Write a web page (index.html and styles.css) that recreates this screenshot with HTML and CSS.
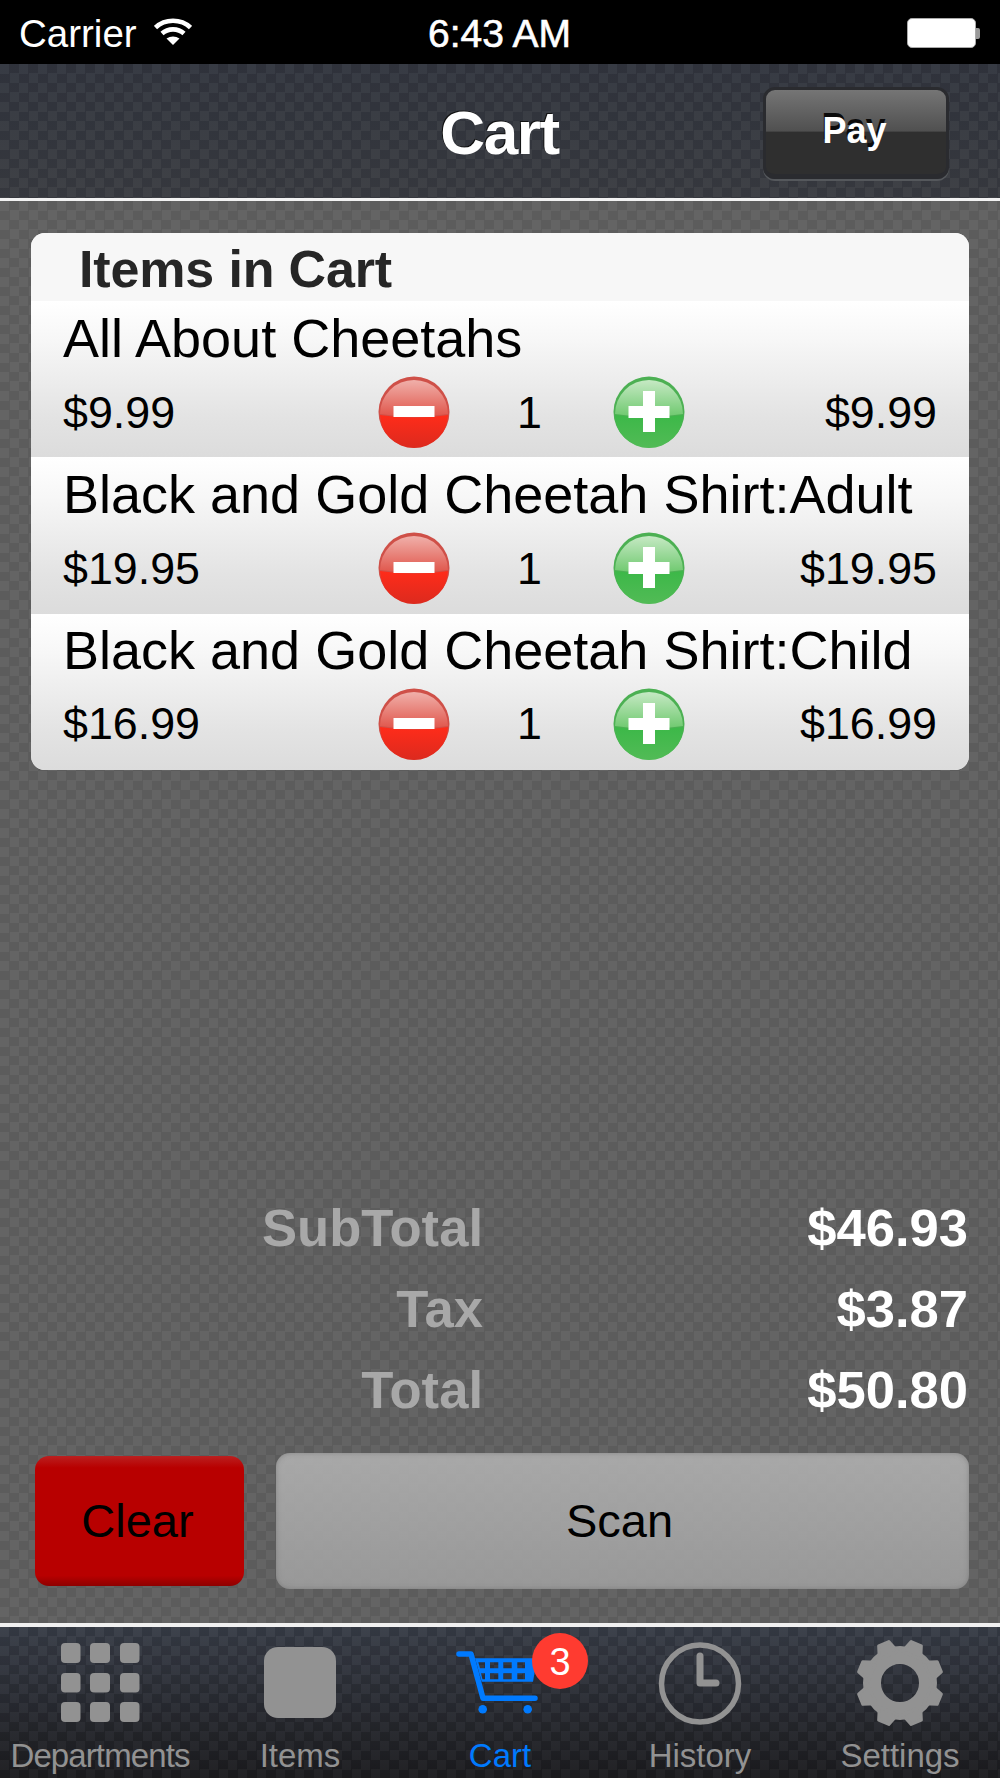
FILE: index.html
```html
<!DOCTYPE html>
<html lang="en">
<head>
<meta charset="utf-8">
<title>Cart</title>
<link rel="stylesheet" href="styles.css">
</head>
<body>
<div class="app">
  <div class="status">
    <div class="status-left">
      <span>Carrier</span>
      <svg class="wifi" viewBox="0 0 38 28"><g fill="none" stroke="#fff" stroke-width="4.600"><path d="M1.500 10.500C11 1.500 27 1.500 36.500 10.500"/><path d="M8 16.500C14 11 24 11 30 16.500"/></g><path d="M12.500 21.500C16.500 18.800 21.500 18.800 25.500 21.500L19 28Z" fill="#fff"/></svg>
    </div>
    <div class="clock">6:43 AM</div>
    <div class="battery"><div class="battery-body"></div><div class="battery-cap"></div></div>
  </div>

  <header class="nav">
    <h1 class="nav-title">Cart</h1>
    <button class="pay">Pay</button>
  </header>

  <main class="content">
    <section class="card">
      <h2 class="card-head">Items in Cart</h2>
      <article class="row">
        <div class="row-title">All About Cheetahs</div>
        <div class="row-line">
          <span class="price">$9.99</span>
          <svg class="round" viewBox="0 0 72 72"><use href="#minus-btn"/></svg>
          <span class="qty">1</span>
          <svg class="round" viewBox="0 0 72 72"><use href="#plus-btn"/></svg>
          <span class="total">$9.99</span>
        </div>
      </article>
      <article class="row">
        <div class="row-title">Black and Gold Cheetah Shirt:Adult</div>
        <div class="row-line">
          <span class="price">$19.95</span>
          <svg class="round" viewBox="0 0 72 72"><use href="#minus-btn"/></svg>
          <span class="qty">1</span>
          <svg class="round" viewBox="0 0 72 72"><use href="#plus-btn"/></svg>
          <span class="total">$19.95</span>
        </div>
      </article>
      <article class="row">
        <div class="row-title">Black and Gold Cheetah Shirt:Child</div>
        <div class="row-line">
          <span class="price">$16.99</span>
          <svg class="round" viewBox="0 0 72 72"><use href="#minus-btn"/></svg>
          <span class="qty">1</span>
          <svg class="round" viewBox="0 0 72 72"><use href="#plus-btn"/></svg>
          <span class="total">$16.99</span>
        </div>
      </article>
    </section>

    <section class="totals">
      <div class="sum-row"><span class="sum-label">SubTotal</span><span class="sum-value">$46.93</span></div>
      <div class="sum-row"><span class="sum-label">Tax</span><span class="sum-value">$3.87</span></div>
      <div class="sum-row"><span class="sum-label">Total</span><span class="sum-value">$50.80</span></div>
    </section>

    <div class="actions">
      <button class="clear">Clear</button>
      <button class="scan">Scan</button>
    </div>
  </main>

  <nav class="tabs">
    <div class="tab">
      <svg class="tab-icon" viewBox="0 0 100 100"><g fill="#929292"><rect x="11" y="10" width="19.500" height="20" rx="4"/><rect x="40" y="10" width="20" height="20" rx="4"/><rect x="70" y="10" width="19.500" height="20" rx="4"/><rect x="11" y="40" width="19.500" height="19.500" rx="4"/><rect x="40" y="40" width="20" height="19.500" rx="4"/><rect x="70" y="40" width="19.500" height="19.500" rx="4"/><rect x="11" y="69" width="19.500" height="20" rx="4"/><rect x="40" y="69" width="20" height="20" rx="4"/><rect x="70" y="69" width="19.500" height="20" rx="4"/></g></svg>
      <span class="tab-label tab-label-long">Departments</span>
    </div>
    <div class="tab">
      <svg class="tab-icon" viewBox="0 0 100 100"><rect x="14" y="14" width="72" height="71" rx="14" fill="#929292"/></svg>
      <span class="tab-label">Items</span>
    </div>
    <div class="tab tab-active">
      <svg class="tab-icon" viewBox="0 0 100 100"><path d="M9 21H21L33 65.300H85" fill="none" stroke="#007aff" stroke-width="5.500" stroke-linecap="round" stroke-linejoin="round"/><path d="M25 25.300H87L83 48.700H31.700ZM28.300 29.300L30 35.300H35V29.300ZM40 29.300V35.300H48.300V29.300ZM53.300 29.300V35.300H61.700V29.300ZM67.300 29.300V35.300H75V29.300ZM31 40.300L32.500 46.300H35V40.300ZM40 40.300V46.300H48.300V40.300ZM53.300 40.300V46.300H61.700V40.300ZM67.300 40.300V46.300H75V40.300Z" fill="#007aff" fill-rule="evenodd"/><circle cx="32.700" cy="76.300" r="4.300" fill="#007aff"/><circle cx="77.700" cy="76.300" r="4.300" fill="#007aff"/></svg>
      <span class="tab-label">Cart</span>
      <span class="badge">3</span>
    </div>
    <div class="tab">
      <svg class="tab-icon" viewBox="0 0 100 100"><circle cx="50" cy="50.500" r="38.500" fill="none" stroke="#929292" stroke-width="5.500"/><path d="M50 23V50H66" fill="none" stroke="#929292" stroke-width="7" stroke-linecap="round" stroke-linejoin="round"/></svg>
      <span class="tab-label">History</span>
    </div>
    <div class="tab">
      <svg class="tab-icon" viewBox="0 0 100 100">
        <circle cx="50" cy="50" r="28" fill="none" stroke="#929292" stroke-width="18"/>
        <g fill="#929292" stroke="#929292" stroke-width="3" stroke-linejoin="round">
          <use href="#gear-tooth" transform="rotate(22.500 50 50)"/>
          <use href="#gear-tooth" transform="rotate(67.500 50 50)"/>
          <use href="#gear-tooth" transform="rotate(112.500 50 50)"/>
          <use href="#gear-tooth" transform="rotate(157.500 50 50)"/>
          <use href="#gear-tooth" transform="rotate(202.500 50 50)"/>
          <use href="#gear-tooth" transform="rotate(247.500 50 50)"/>
          <use href="#gear-tooth" transform="rotate(292.500 50 50)"/>
          <use href="#gear-tooth" transform="rotate(337.500 50 50)"/>
        </g>
      </svg>
      <span class="tab-label">Settings</span>
    </div>
  </nav>
</div>

<svg class="defs" aria-hidden="true">
  <defs>
    <path id="gear-tooth" d="M44.500 7.500H55.500L60 20H40Z"/>
    <linearGradient id="red-top" x1="0" y1="0" x2="0" y2="1"><stop offset="0" stop-color="#f0b0aa"/><stop offset="1" stop-color="#e0564b"/></linearGradient>
    <linearGradient id="red-bot" x1="0" y1="0" x2="0" y2="1"><stop offset="0" stop-color="#ff2c1a"/><stop offset="1" stop-color="#dc2a1e"/></linearGradient>
    <linearGradient id="green-top" x1="0" y1="0" x2="0" y2="1"><stop offset="0" stop-color="#c6e9c4"/><stop offset="1" stop-color="#6fc96f"/></linearGradient>
    <linearGradient id="green-bot" x1="0" y1="0" x2="0" y2="1"><stop offset="0" stop-color="#3cb848"/><stop offset="1" stop-color="#52bb56"/></linearGradient>
    <g id="minus-btn">
      <circle cx="36" cy="36" r="35.500" fill="#cf5048"/>
      <path d="M2 38A34 34 0 0 1 70 38Q36 43 2 38Z" fill="url(#red-top)"/>
      <path d="M2 39Q36 44 70 39A34 33 0 0 1 2 39Z" fill="url(#red-bot)"/>
      <rect x="15.500" y="30" width="41" height="11" fill="#fff"/>
    </g>
    <g id="plus-btn">
      <circle cx="36" cy="36" r="35.500" fill="#4cb053"/>
      <path d="M2 38A34 34 0 0 1 70 38Q36 43 2 38Z" fill="url(#green-top)"/>
      <path d="M2 39Q36 44 70 39A34 33 0 0 1 2 39Z" fill="url(#green-bot)"/>
      <path d="M30 15H42V30H56.500V42H42V56H30V42H15.500V30H30Z" fill="#fff"/>
    </g>
  </defs>
</svg>
</body>
</html>
```

FILE: styles.css
```css
* { box-sizing: border-box; }

html, body {
  margin: 0;
  padding: 0;
  background: #000;
}

body {
  font-family: "Liberation Sans", Arial, sans-serif;
}

.defs {
  position: absolute;
  width: 0;
  height: 0;
}

.app {
  width: 1000px;
  height: 1778px;
  display: flex;
  flex-direction: column;
  overflow: hidden;
}

/* status bar */
.status {
  height: 64px;
  flex: none;
  background: #000;
  color: #fff;
  display: grid;
  grid-template-columns: 1fr auto 1fr;
  align-items: center;
  padding: 4px 20px 0 19px;
  font-size: 38.500px;
}

.status-left {
  display: flex;
  align-items: center;
  gap: 17px;
}

.wifi {
  width: 38px;
  height: 28px;
  margin-top: -6px;
}

.clock {
  font-size: 39px;
  -webkit-text-stroke: 0.6px #fff;
}

.battery {
  justify-self: end;
  display: flex;
  align-items: center;
  margin-top: -2px;
}

.battery-body {
  width: 69px;
  height: 30px;
  background: #fff;
  border: 1px solid #aaa;
  border-radius: 5px;
}

.battery-cap {
  width: 4px;
  height: 11px;
  background: #999;
  border-radius: 0 2px 2px 0;
}

/* nav bar */
.nav {
  height: 137px;
  flex: none;
  display: flex;
  align-items: center;
  justify-content: center;
  position: relative;
  background-color: #33363e;
  background-image:
    repeating-conic-gradient(rgba(0, 0, 0, .065) 0 25%, rgba(255, 255, 255, .025) 0 50%),
    linear-gradient(#32363f, #3a3c42);
  background-size: 19px 19px, auto;
  border-bottom: 3px solid #f2f2f2;
}

.nav-title {
  margin: 3px 0 0 -1px;
  font-size: 62px;
  font-weight: 700;
  letter-spacing: -1.400px;
  color: #fff;
  text-shadow: -1px -1px 0 #111;
}

.pay {
  position: absolute;
  left: 763px;
  top: 23px;
  width: 186px;
  height: 92px;
  padding: 0 3px 3px 0;
  border: 3px solid #2a2b2f;
  border-bottom: 5px solid #2a2b2f;
  border-radius: 12px;
  background: linear-gradient(#757575 0, #505050 49%, #2f2f2f 50%, #2f2f2f 100%);
  box-shadow: 0 2px 0 #55585c;
  font: 700 36px "Liberation Sans", Arial, sans-serif;
  color: #fff;
  text-shadow: -1px -4px 0 #0a0a0a;
}

/* main */
.content {
  flex: 1;
  display: flex;
  flex-direction: column;
  padding: 32px 31px 0;
  background-color: #606060;
  background-image: repeating-conic-gradient(#5c5c5c 0 25%, #646464 0 50%);
  background-size: 19px 19px;
  border-bottom: 4px solid #f0f0f0;
}

.card {
  height: 537px;
  flex: none;
  border-radius: 14px;
  overflow: hidden;
  background: #f7f7f7;
}

.card-head {
  margin: 0;
  height: 68px;
  padding: 5px 0 0 48px;
  font-size: 52px;
  letter-spacing: -0.150px;
  line-height: 62px;
  font-weight: 700;
  color: #262626;
  background: #f7f7f7;
}

.row {
  height: 156.300px;
  padding: 0 32px;
  background: linear-gradient(#fff 0, #f7f7f7 25%, #e3e3e3 75%, #dcdcdc 100%);
  color: #000;
}

.row-title {
  height: 75px;
  font-size: 54px;
  line-height: 74px;
  white-space: nowrap;
}

.row:last-child .row-title {
  height: 74px;
  line-height: 73px;
}

.row-line {
  display: grid;
  grid-template-columns: 315px 72px 163px 72px 1fr;
  align-items: center;
  height: 72px;
  font-size: 44.800px;
}

.round {
  width: 72px;
  height: 72px;
  display: block;
}

.qty {
  text-align: center;
  padding-right: 4px;
}

.total {
  text-align: right;
}

/* totals */
.totals {
  margin-top: auto;
  display: flex;
  flex-direction: column;
  gap: 21px;
  padding: 0 1px 32px 0;
}

.sum-row {
  display: grid;
  grid-template-columns: 452px 1fr;
  font-size: 52.600px;
  line-height: 60px;
  font-weight: 700;
}

.sum-label {
  color: #a8a8a8;
  text-align: right;
}

.sum-value {
  color: #fff;
  text-align: right;
}

/* actions */
.actions {
  display: flex;
  align-items: center;
  gap: 32px;
  height: 137px;
  margin-bottom: 34px;
}

.clear,
.scan {
  font: 400 47px "Liberation Sans", Arial, sans-serif;
  color: #000;
}

.clear {
  margin-left: 4px;
  width: 209px;
  height: 130px;
  padding: 0 4px 0 0;
  border: 0;
  border-radius: 14px;
  background: linear-gradient(#bb2020 0, #b80000 9%, #b80000 92%, #8e0000 100%);
}

.scan {
  flex: 1;
  height: 136px;
  padding: 0 6px 0 0;
  border: 0;
  border-radius: 14px;
  background: linear-gradient(rgba(176, 176, 176, .9), rgba(158, 158, 158, .9));
  box-shadow: inset 0 0 5px rgba(100, 100, 100, .5);
}

/* tab bar */
.tabs {
  height: 151px;
  flex: none;
  display: grid;
  grid-template-columns: repeat(5, 200px);
  background-image:
    repeating-conic-gradient(rgba(0, 0, 0, .085) 0 25%, rgba(255, 255, 255, .025) 0 50%),
    linear-gradient(#383d48, #1c1c1f);
  background-size: 19px 19px, auto;
}

.tab {
  position: relative;
  display: flex;
  flex-direction: column;
  align-items: center;
  color: #929292;
}

.tab-icon {
  width: 100px;
  height: 100px;
  margin-top: 6px;
  display: block;
}

.tab-label {
  font-size: 33px;
  line-height: 36px;
  margin-top: 5px;
  white-space: nowrap;
}

.tab-label-long {
  letter-spacing: -0.900px;
}

.tab-active {
  color: #007aff;
}

.badge {
  position: absolute;
  left: 132px;
  top: 6px;
  width: 56px;
  height: 56px;
  border-radius: 50%;
  background: #ff3b30;
  color: #fff;
  font-size: 38px;
  line-height: 58px;
  text-align: center;
}
```
